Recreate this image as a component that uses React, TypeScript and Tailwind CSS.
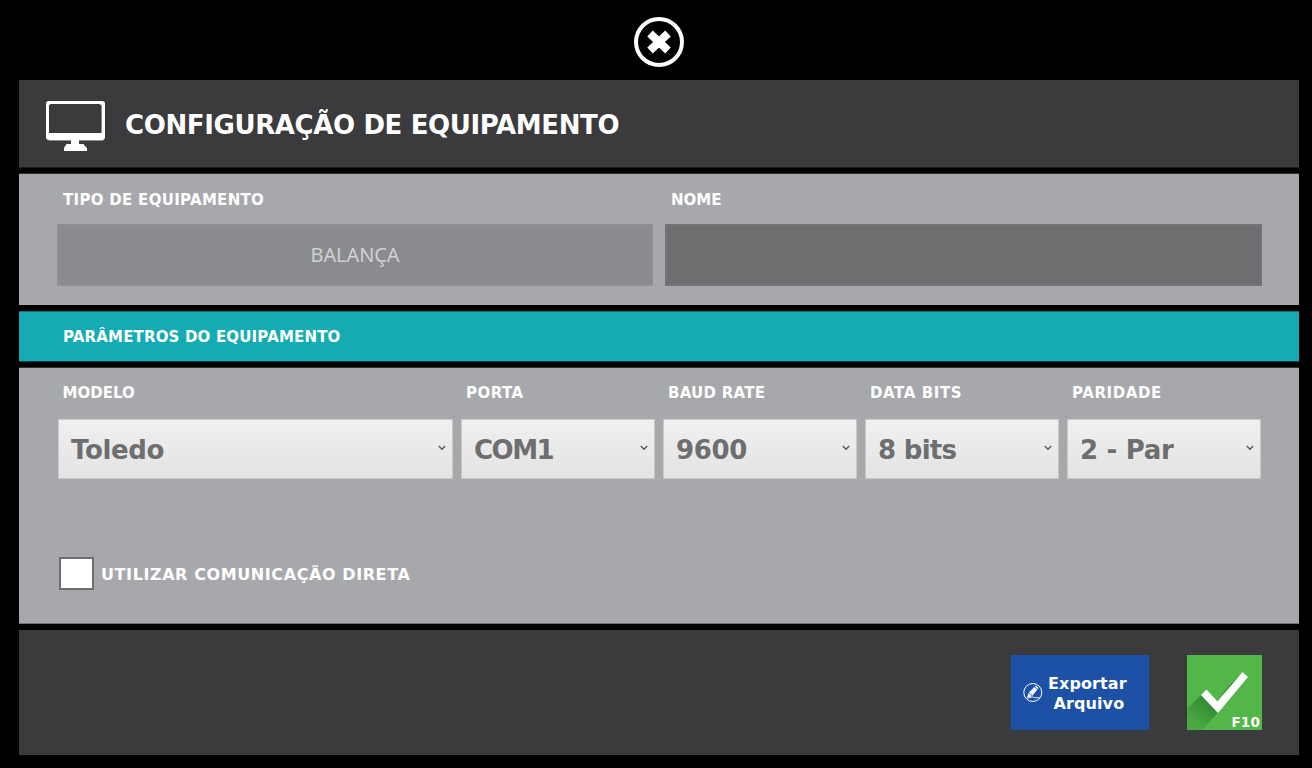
type SelectFieldProps = {
  label: string
  value: string
  className: string
  labelClass?: string
  valueClass?: string
}

const SelectField = ({ label, value, className, labelClass = 'pl-[5px]', valueClass = '' }: SelectFieldProps) => (
  <div className={className}>
    <label className={`block text-[15px] leading-5 font-bold text-white whitespace-nowrap ${labelClass}`}>{label}</label>
    <button className="mt-4 flex h-[60px] w-full items-center justify-between border border-[#c9cac7] bg-gradient-to-b from-[#f0f0f0] to-[#e3e3e3] pl-3 pr-[6px] pt-[2px]">
      <span className={`text-[26px] leading-8 font-bold text-[#6d6e70] whitespace-nowrap ${valueClass}`}>{value}</span>
      <svg className="mb-1 h-[6px] w-2" viewBox="0 0 8 6" fill="none">
        <path d="M0.8 1L4 4.2L7.2 1" stroke="#55565a" strokeWidth="1.4" />
      </svg>
    </button>
  </div>
)

const CloseIcon = () => (
  <svg className="h-[50px] w-[50px]" viewBox="0 0 50 50" fill="none">
    <circle cx="25" cy="25" r="23" stroke="white" strokeWidth="4" />
    <path d="M16 16.500L34 33.500M34 16.500L16 33.500" stroke="white" strokeWidth="8" />
  </svg>
)

const MonitorIcon = () => (
  <svg className="h-[50px] w-[60px]" viewBox="0 0 60 50">
    <path fill="#8e8e90" d="M2 38h56l-1 2H3z" />
    <path
      fill="white"
      d="M3 0h53a3 3 0 0 1 3 3v33a3 3 0 0 1-3 3H33v4h4.500l1 1.500 1.500 1.500l1 1v3H18v-3l1.500-2.500 1-1.500H25v-4H3a3 3 0 0 1-3-3V3a3 3 0 0 1 3-3z"
    />
    <path fill="#8e8e90" d="M54 3l2 2v27h-2z" />
    <path fill="#3b3a3c" d="M4.500 3h49l1.500 1.500V32H3V4.500z" />
  </svg>
)

const PencilIcon = () => (
  <svg className="h-5 w-5" viewBox="0 0 20 20" fill="none">
    <circle cx="9.800" cy="9.500" r="9" stroke="white" strokeWidth="1" />
    <path d="M4 14.800L5.500 10L9 13.300z" fill="white" />
    <path d="M6 9.400L11.300 3.900L14.300 6.600L9.400 12.800z" fill="white" />
    <path d="M11.900 3.400L12.900 2.500L15.600 4.900L14.900 6z" fill="white" />
    <path d="M4.200 15C7.500 15 9.200 13.200 10.300 14.100C11 14.900 12 14.700 16.800 14.700" stroke="white" strokeWidth="0.9" />
  </svg>
)

const CheckIcon = () => (
  <svg className="h-[75px] w-[75px]" viewBox="0 0 75 75">
    <defs>
      <linearGradient id="shade" x1="26" y1="42" x2="6" y2="66" gradientUnits="userSpaceOnUse">
        <stop offset="0" stopColor="#2f8030" />
        <stop offset="1" stopColor="#4aa842" />
      </linearGradient>
      <linearGradient id="shade2" x1="46" y1="30" x2="34" y2="42" gradientUnits="userSpaceOnUse">
        <stop offset="0" stopColor="#2c7a2d" />
        <stop offset="1" stopColor="#52b648" />
      </linearGradient>
    </defs>
    <path d="M14 40L0 54V75H15L31 57.500z" fill="url(#shade)" />
    <path d="M55.500 17.500L30 43L32 49L56 20z" fill="url(#shade2)" />
    <path d="M14 40L19.500 34.500L30.500 46.500L55.500 17L61 22L31 58z" fill="white" />
  </svg>
)

export default function App() {
  return (
    <div className="flex h-[768px] w-[1312px] flex-col bg-black pl-[19px] pr-[13px] font-['DejaVu_Sans','Liberation_Sans',sans-serif]">
      <div className="flex h-20 shrink-0 justify-center pt-[17px]">
        <button className="h-[50px] w-[50px]">
          <CloseIcon />
        </button>
      </div>

      {/* Title bar */}
      <header className="flex h-[88px] shrink-0 border-b border-[#1d1d1e] bg-[#3b3a3c] pl-[27px] pt-[21px]">
        <MonitorIcon />
        <h1 className="ml-[19px] mt-2 text-[26px] leading-8 font-bold tracking-[-0.38px] text-white whitespace-nowrap">
          CONFIGURAÇÃO DE EQUIPAMENTO
        </h1>
      </header>

      {/* Equipment type and name */}
      <section className="mt-[5px] flex h-[132px] shrink-0 gap-3 border-t border-[#2e2e2f] bg-[#a7a8ab] pl-[38px] pt-4">
        <div className="w-[596px]">
          <label className="block pl-[6px] text-[15px] leading-5 font-bold tracking-[0.3px] text-white whitespace-nowrap">
            TIPO DE EQUIPAMENTO
          </label>
          <div className="mt-[14px] flex h-[62px] items-center justify-center border-2 border-[#8e8f92] bg-[#8a8b8e] font-['Noto_Sans',sans-serif] text-xl tracking-[-0.1px] text-[#d0d1d3]">
            BALANÇA
          </div>
        </div>
        <div className="w-[597px]">
          <label className="block pl-[6px] text-[15px] leading-5 font-bold text-white whitespace-nowrap">NOME</label>
          <div className="mt-[14px] h-[62px] border-2 border-[#737476] bg-[#6d6e70]" />
        </div>
      </section>

      <div className="mt-[6px] flex h-[51px] shrink-0 items-center border-y border-t-[#0e7178] border-b-[#083f43] bg-[#14abb4] pl-[44px]">
        <h2 className="text-[15px] leading-5 font-bold tracking-[0.17px] text-white whitespace-nowrap">
          PARÂMETROS DO EQUIPAMENTO
        </h2>
      </div>

      {/* Serial parameters */}
      <section className="mt-[5px] h-[257px] shrink-0 border-y border-t-[#2e2e2f] border-b-[#737476] bg-[#a7a8ab] pl-[39px] pt-[15px]">
        <div className="flex gap-2">
          <SelectField label="MODELO" value="Toledo" className="w-[395px]" labelClass="pl-[4.5px]" valueClass="tracking-[-0.35px]" />
          <SelectField label="PORTA" value="COM1" className="w-[194px]" labelClass="pl-[5px] tracking-[0.45px]" valueClass="tracking-[-1.5px]" />
          <SelectField label="BAUD RATE" value="9600" className="w-[194px]" labelClass="pl-[5px] tracking-[0.25px]" valueClass="tracking-[-0.3px]" />
          <SelectField label="DATA BITS" value="8 bits" className="w-[194px]" labelClass="pl-[5px] tracking-[0.6px]" valueClass="tracking-[-0.7px]" />
          <SelectField label="PARIDADE" value="2 - Par" className="w-[194px]" labelClass="pl-[5px] tracking-[0.6px]" valueClass="tracking-[-0.3px]" />
        </div>
        <label className="mt-[78px] ml-px flex items-center">
          <span className="h-[33px] w-[35px] border-2 border-[#6d6e70] bg-white" />
          <span className="ml-[7px] pt-[2px] text-base leading-5 font-bold tracking-[0.59px] text-white whitespace-nowrap">
            UTILIZAR COMUNICAÇÃO DIRETA
          </span>
        </label>
      </section>

      <footer className="mt-[6px] flex h-[125px] shrink-0 justify-end bg-[#3b3a3c] pt-[25px] pr-[37px]">
        <button className="flex h-[75px] w-[138px] items-center bg-[#1c51a5] pl-3">
          <PencilIcon />
          <span className="ml-[5px] flex flex-col items-center pt-[2px] text-base leading-5 font-bold text-white">
            <span className="tracking-[0.1px]">Exportar</span>
            <span className="pl-[3px] tracking-[0.1px]">Arquivo</span>
          </span>
        </button>
        <button className="relative ml-[38px] h-[75px] w-[75px] bg-[#52b648]">
          <CheckIcon />
          <span className="absolute right-[2px] bottom-0 text-[13.5px] leading-4 font-bold tracking-[0.2px] text-white">F10</span>
        </button>
      </footer>
    </div>
  )
}
